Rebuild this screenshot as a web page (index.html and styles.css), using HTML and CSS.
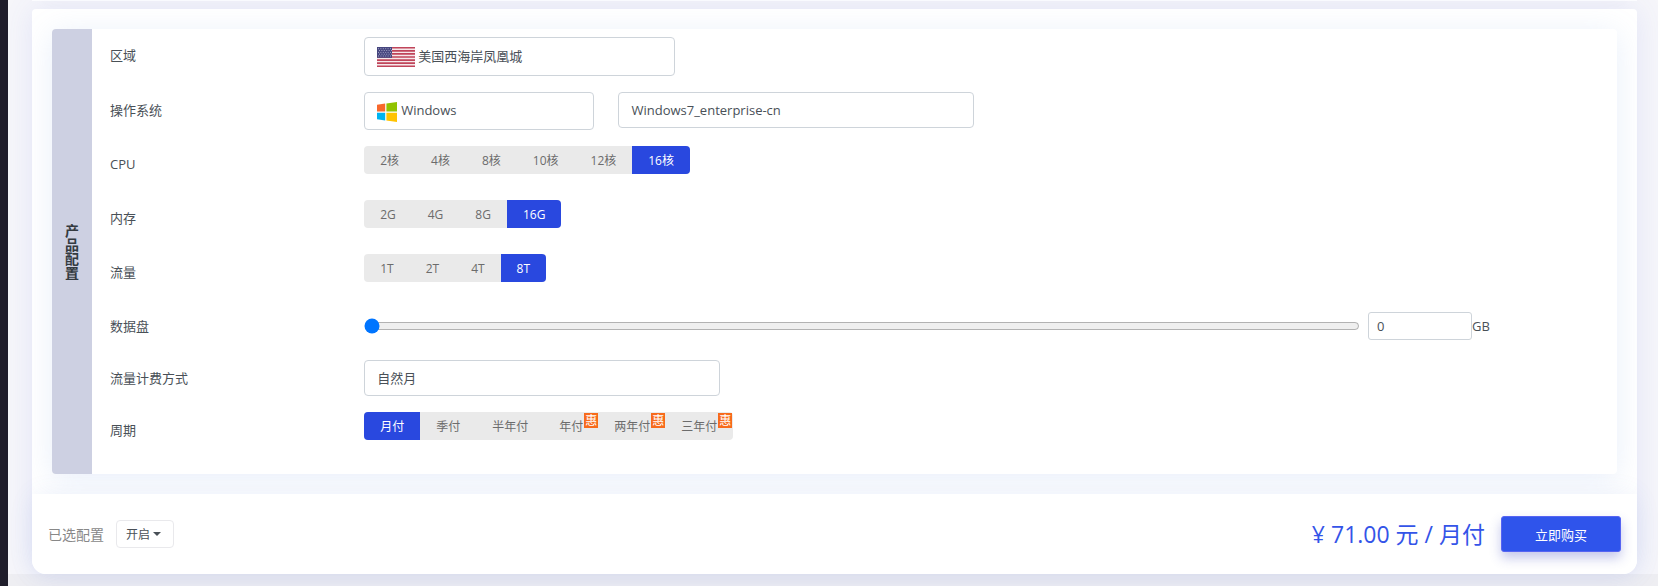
FILE: index.html
```html
<!DOCTYPE html>
<html lang="zh-CN">
<head>
	<meta charset="UTF-8">
	<title>产品配置</title>
	<link rel="stylesheet" href="styles.css">
</head>

<body>
	<div class="sidebar"></div>

	<div class="main">
		<div class="prev_card"></div>

		<form class="card">
			<div class="card_body">
				<div class="panel">
					<h2 class="panel_title">产品配置</h2>

					<div class="rows">
						<div class="row">
							<label class="name" for="area">区域</label>
							<div class="content">
								<div class="select_box w_area">
									<svg class="icon" width="38" height="20" viewBox="0 0 38 20">
										<rect width="38" height="20" fill="#f6e8ea" />
										<path d="M0 .75h38M0 3.85h38M0 6.9h38M0 10h38M0 13.1h38M0 16.15h38M0 19.25h38" stroke="#c0455a" stroke-width="1.6" />
										<rect width="15" height="10.8" fill="#46467f" />
										<path d="M1 1.7h13M2 3.5h13M1 5.4h13M2 7.2h13M1 9h13" stroke="#a3a3c4" stroke-width="1" stroke-dasharray="1 1.4" />
									</svg>
									<select id="area" class="select tall has_flag">
										<option>美国西海岸凤凰城</option>
									</select>
								</div>
							</div>
						</div>

						<div class="row">
							<label class="name" for="os">操作系统</label>
							<div class="content">
								<div class="select_box w_os">
									<svg class="icon" width="20" height="20" viewBox="0 0 20 20">
										<path d="M0 2.8L8.2 1.6V9.6H0z" fill="#f8682c" />
										<path d="M9.4 1.4L20 0V9.6H9.4z" fill="#91c300" />
										<path d="M0 10.8H8.2V18.5L0 17.3z" fill="#00b4f1" />
										<path d="M9.4 10.8H20V20L9.4 18.6z" fill="#ffc300" />
									</svg>
									<select id="os" class="select has_logo">
										<option>Windows</option>
									</select>
								</div>
								<div class="select_box w_version">
									<select class="select short" aria-label="系统版本">
										<option>Windows7_enterprise-cn</option>
									</select>
								</div>
							</div>
						</div>

						<div class="row" role="radiogroup" aria-labelledby="cpu_name">
							<span class="name" id="cpu_name">CPU</span>
							<div class="content">
								<div class="group">
									<label class="item"><input type="radio" name="cpu">2核</label>
									<label class="item"><input type="radio" name="cpu">4核</label>
									<label class="item"><input type="radio" name="cpu">8核</label>
									<label class="item"><input type="radio" name="cpu">10核</label>
									<label class="item"><input type="radio" name="cpu">12核</label>
									<label class="item"><input type="radio" name="cpu" checked>16核</label>
								</div>
							</div>
						</div>

						<div class="row" role="radiogroup" aria-labelledby="memory_name">
							<span class="name" id="memory_name">内存</span>
							<div class="content">
								<div class="group">
									<label class="item"><input type="radio" name="memory">2G</label>
									<label class="item"><input type="radio" name="memory">4G</label>
									<label class="item"><input type="radio" name="memory">8G</label>
									<label class="item"><input type="radio" name="memory" checked>16G</label>
								</div>
							</div>
						</div>

						<div class="row" role="radiogroup" aria-labelledby="flow_name">
							<span class="name" id="flow_name">流量</span>
							<div class="content">
								<div class="group">
									<label class="item"><input type="radio" name="flow">1T</label>
									<label class="item"><input type="radio" name="flow">2T</label>
									<label class="item"><input type="radio" name="flow">4T</label>
									<label class="item"><input type="radio" name="flow" checked>8T</label>
								</div>
							</div>
						</div>

						<div class="row compact">
							<label class="name" for="disk">数据盘</label>
							<div class="content disk">
								<input type="range" id="disk" class="range" min="0" max="500" value="0">
								<input type="text" id="disk_size" class="size" value="0">
								<label for="disk_size">GB</label>
							</div>
						</div>

						<div class="row compact">
							<label class="name" for="billing">流量计费方式</label>
							<div class="content">
								<div class="select_box w_version">
									<select id="billing" class="select short">
										<option>自然月</option>
									</select>
								</div>
							</div>
						</div>

						<div class="row" role="radiogroup" aria-labelledby="cycle_name">
							<span class="name" id="cycle_name">周期</span>
							<div class="content">
								<div class="group">
									<label class="item"><input type="radio" name="cycle" checked>月付</label>
									<label class="item"><input type="radio" name="cycle">季付</label>
									<label class="item"><input type="radio" name="cycle">半年付</label>
									<label class="item on_sale"><input type="radio" name="cycle">年付<span class="sale">惠</span></label>
									<label class="item on_sale"><input type="radio" name="cycle">两年付<span class="sale">惠</span></label>
									<label class="item on_sale"><input type="radio" name="cycle">三年付<span class="sale">惠</span></label>
								</div>
							</div>
						</div>
					</div>
				</div>
			</div>

			<div class="bar">
				<span class="chosen">已选配置</span>
				<button type="button" class="toggle">开启<span class="caret"></span></button>
				<span class="price">¥ 71.00 元 / 月付</span>
				<button type="submit" class="buy">立即购买</button>
			</div>
		</form>

		<div class="page_footer"></div>
	</div>
</body>

</html>
```

FILE: styles.css
```css
* {
	box-sizing: border-box;
}

body {
	margin: 0;
	display: flex;
	min-height: 100vh;
	background: #f6f6fa;
	color: #495057;
	font-family: "Open Sans", "Noto Sans CJK SC", sans-serif;
	font-size: 13px;
}

input,
select,
button {
	font-family: inherit;
	font-size: inherit;
	color: inherit;
}

.sidebar {
	width: 8px;
	flex-shrink: 0;
	background: #1f1d2b;
}

.main {
	flex: 1;
	min-width: 0;
	display: flex;
	flex-direction: column;
}

.prev_card {
	height: 1px;
	margin: 0 21px 8px 24px;
	background: #fff;
	box-shadow: 0 0 20px rgba(80, 100, 220, 0.1);
}

.card {
	margin: 0 21px 0 24px;
	border-radius: 4px 4px 14px 14px;
	background: #fff;
	box-shadow: 0 0 30px rgba(80, 100, 220, 0.12);
	position: relative;
	z-index: 0;
}

.card_body {
	padding: 20px;
	overflow: hidden;
}

.panel {
	display: flex;
	border-radius: 4px;
	background: #fff;
	box-shadow: 0 4px 30px rgba(130, 165, 225, 0.18);
}

.panel_title {
	width: 40px;
	margin: 0;
	padding: 0 13px;
	flex-shrink: 0;
	display: flex;
	align-items: center;
	border-radius: 4px 0 0 4px;
	background: #cdd0e2;
	color: #343a40;
	font-size: 14px;
	font-weight: bold;
	line-height: 14px;
}

.rows {
	flex: 1;
	padding: 8px 0;
	display: flex;
	flex-direction: column;
	gap: 16px;
}

.row {
	display: grid;
	grid-template-columns: 1fr 5fr;
	align-items: start;
	min-height: 38px;
}

.row:last-child {
	margin-bottom: 16px;
}

.row.compact {
	height: 36px;
	min-height: 0;
}

.name {
	padding-left: 18px;
	line-height: 36px;
}

.content {
	display: flex;
	gap: 24px;
	padding: 0 8px 0 18px;
}

.select_box {
	position: relative;
}

.w_area {
	width: 25%;
}

.w_os {
	width: 18.5%;
}

.w_version {
	width: 28.6%;
}

.icon {
	position: absolute;
	left: 13px;
	top: 10px;
	pointer-events: none;
}

.select {
	display: block;
	width: 100%;
	height: 38px;
	padding: 0 12px 2px;
	appearance: none;
	border: 1px solid #ced4da;
	border-radius: 4px;
	background: #fff;
}

.select.tall {
	height: 39px;
}

.select.short {
	height: 36px;
	padding-bottom: 0;
}

.select.has_flag {
	padding-left: 53px;
}

.select.has_logo {
	padding-left: 36px;
}

.group {
	display: flex;
	border-radius: 4px;
	overflow: hidden;
	background: #eaeaea;
	color: #6c6c6c;
	font-size: 12px;
}

.item {
	position: relative;
	height: 28px;
	padding: 0 16px;
	line-height: 30px;
	cursor: pointer;
}

.item.on_sale {
	padding: 0 16px 0 15px;
}

.item input {
	position: absolute;
	opacity: 0;
	pointer-events: none;
}

.item:has(input:checked) {
	background: #2948df;
	color: #fff;
}

.sale {
	position: absolute;
	top: 1px;
	right: 1px;
	width: 14px;
	background: #f76b1c;
	color: #fff;
	line-height: 15px;
	text-align: center;
}

.disk {
	height: 36px;
	gap: 0;
	align-items: center;
}

.range {
	width: 80%;
	margin: 0 8px 0 0;
}

.size {
	width: 104px;
	height: 28px;
	padding: 0 8px;
	border: 1px solid #ced4da;
	border-radius: 3px;
}

.bar {
	position: relative;
	height: 80px;
	padding: 0 16px;
	display: flex;
	align-items: center;
	border-radius: 0 0 14px 14px;
	background: #fff;
}

/* glow of the bottom bar, kept behind it */
.card::before {
	content: "";
	position: absolute;
	left: 0;
	right: 0;
	bottom: 0;
	height: 80px;
	z-index: -1;
	border-radius: 14px;
	box-shadow: 0 0 24px rgba(80, 120, 210, 0.1);
}

.chosen {
	color: #888;
	font-size: 14px;
}

.toggle {
	height: 28px;
	margin-left: 12px;
	padding: 0 12px 0 9px;
	display: flex;
	align-items: center;
	gap: 3px;
	border: 1px solid #e9e9ec;
	border-radius: 4px;
	background: #fff;
	font-size: 12px;
}

.caret {
	border: 4px solid transparent;
	border-top-color: #495057;
	border-bottom: 0;
}

.price {
	margin-left: auto;
	color: #3454e8;
	font-size: 23px;
	line-height: 30px;
}

.buy {
	width: 120px;
	height: 36px;
	margin-left: 16px;
	border: 1px solid #5664f2;
	border-radius: 3px;
	background: #2f54eb;
	color: #fff;
	box-shadow: 0 6px 12px rgba(60, 70, 190, 0.3);
}

.page_footer {
	flex: 1;
	background: #eeeef2;
}
```
